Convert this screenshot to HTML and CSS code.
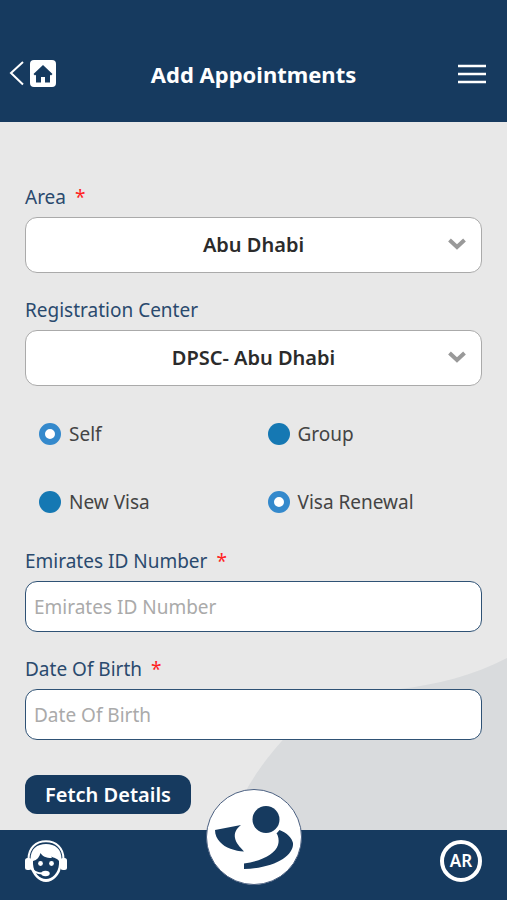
FILE: index.html
```html
<!DOCTYPE html>
<html lang="en">
<head>
  <meta charset="UTF-8">
  <meta name="viewport" content="width=device-width, initial-scale=1.0">
  <title>Add Appointments</title>
  <link rel="stylesheet" href="styles.css">
</head>
<body>
<header class="topbar">
  <a class="home-link" href="#" aria-label="Back to home">
    <svg width="48" height="28" viewBox="0 0 48 28">
      <path d="M14 2 L2 13 L14 24.500" fill="none" stroke="#fff" stroke-width="2"/>
      <rect x="21" y="0" width="26" height="27" rx="4" fill="#fff"/>
      <path d="M34 5 L43.500 14 L42 15.500 L41 14.700 V22.500 H36 V17 H32 V22.500 H27 V14.700 L26 15.500 L24.500 14 Z" fill="#163a5f"/>
    </svg>
  </a>
  <h1>Add Appointments</h1>
  <button class="menu-btn" type="button" aria-label="Menu">
    <svg width="28" height="20" viewBox="0 0 28 20">
      <path d="M0 2 H28 M0 10 H28 M0 18 H28" stroke="#fff" stroke-width="2.400"/>
    </svg>
  </button>
</header>

<main>
  <svg class="backdrop" width="272" height="175" viewBox="0 0 272 175" aria-hidden="true">
    <path d="M272 3 C240 20 200 30 165 34 C110 40 70 58 46 87 C30 105 20 120 13 132 C6 146 2 160 0 175 H272 Z" fill="#d9dbdd"/>
  </svg>

  <form>
    <div class="field">
      <label for="area">Area <span class="required">*</span></label>
      <div class="select-box">
        <select id="area">
          <option>Abu Dhabi</option>
        </select>
        <svg class="chevron" width="18" height="12" viewBox="0 0 18 12"><path d="M1.500 2 L9 9 L16.500 2" fill="none" stroke="#999" stroke-width="4"/></svg>
      </div>
    </div>

    <div class="field">
      <label for="center">Registration Center</label>
      <div class="select-box">
        <select id="center">
          <option>DPSC- Abu Dhabi</option>
        </select>
        <svg class="chevron" width="18" height="12" viewBox="0 0 18 12"><path d="M1.500 2 L9 9 L16.500 2" fill="none" stroke="#999" stroke-width="4"/></svg>
      </div>
    </div>

    <div class="choices">
      <label><input type="radio" name="who" checked> Self</label>
      <label><input type="radio" name="who"> Group</label>
      <label><input type="radio" name="visa"> New Visa</label>
      <label><input type="radio" name="visa" checked> Visa Renewal</label>
    </div>

    <div class="field">
      <label for="eid">Emirates ID Number <span class="required">*</span></label>
      <input class="text-input" id="eid" type="text" placeholder="Emirates ID Number">
    </div>

    <div class="field">
      <label for="dob">Date Of Birth <span class="required">*</span></label>
      <input class="text-input" id="dob" type="text" placeholder="Date Of Birth">
    </div>

    <button class="fetch-btn" type="button">Fetch Details</button>
  </form>
</main>

<footer class="bottombar">
  <a class="support-link" href="#" aria-label="Support">
    <svg width="42" height="42" viewBox="0 0 42 42">
      <path d="M3.500 19 C3.500 8 11 1.200 21 1.200 S38.500 8 38.500 19" fill="none" stroke="#fff" stroke-width="2"/>
      <path d="M5.500 19 C5.500 9 12 4 21 4 S36.500 9 36.500 19 V25 C35.500 35 28 42 21 42 S6.500 35 5.500 25 Z" fill="#fff"/>
      <path d="M8 21 C12 20 14.500 17 15.500 13 C17 16 21 18 27 18 L26 16.500 C29 18 32 18 34 21 V24 C33.500 33 27 39 21 39 S8.500 33 8 24 Z" fill="#163a5f"/>
      <rect x="0" y="18" width="6.500" height="12" rx="2.500" fill="#fff"/>
      <rect x="35.500" y="18" width="6.500" height="12" rx="2.500" fill="#fff"/>
      <circle cx="15.500" cy="23.500" r="2.400" fill="#fff"/>
      <circle cx="26.500" cy="23.500" r="2.400" fill="#fff"/>
      <path d="M5 27 C8 32 12 33.500 18 33.500" fill="none" stroke="#fff" stroke-width="1.800"/>
      <ellipse cx="20.500" cy="33.500" rx="4.200" ry="2.700" fill="#fff"/>
    </svg>
  </a>
  <a class="logo-link" href="#" aria-label="Main page">
    <svg width="96" height="96" viewBox="0 0 96 96">
      <circle cx="48" cy="48" r="47.500" fill="#fff" stroke="#4a5f80"/>
      <circle cx="60" cy="30.500" r="13.500" fill="#163a5f"/>
      <path d="M9 41 L35 36 C30 40 28 44 29 49 C30 54 33 57 38 62.500 C29 62 19 59 14 53 C11 50 9 46 9 41 Z" fill="#163a5f"/>
      <path d="M73.500 41 C81 44 86 49 87 54 C88 66 70 79 38 80 V74.500 C56 72 69 65 72 56 C73.500 51 72 46 70.500 44.500 Z" fill="#163a5f"/>
    </svg>
  </a>
  <button class="lang-btn" type="button">AR</button>
</footer>
</body>
</html>
```

FILE: styles.css
```css
* {
  box-sizing: border-box;
}

body {
  margin: 0;
  min-height: 100vh;
  display: flex;
  flex-direction: column;
  background: #e8e8e8;
  font-family: "Noto Sans", sans-serif;
  font-size: 19px;
  line-height: 28px;
  color: #444;
}

button,
input,
select {
  font: inherit;
}

.topbar {
  display: grid;
  grid-template-columns: 1fr auto 1fr;
  align-items: center;
  height: 122px;
  padding: 26px 9px 0;
  background: #163a5f;
  color: #fff;
}

.topbar h1 {
  margin: 0;
  font-size: 22px;
  font-weight: 700;
}

.home-link,
.support-link,
.logo-link {
  display: flex;
}

.menu-btn {
  display: flex;
  justify-self: end;
  margin-right: 12px;
  padding: 0;
  border: none;
  background: none;
  cursor: pointer;
}

main {
  position: relative;
  flex: 1;
  padding: 61px 25px 16px;
}

.backdrop {
  position: absolute;
  right: 0;
  bottom: 0;
}

form {
  position: relative;
  display: flex;
  flex-direction: column;
  gap: 23px;
}

.field {
  display: flex;
  flex-direction: column;
  gap: 6px;
}

.field > label {
  color: #2a4a6e;
}

.required {
  margin-left: 4px;
  color: #f22;
}

.select-box {
  position: relative;
}

.select-box select {
  display: block;
  width: 100%;
  height: 56px;
  padding: 0 40px;
  appearance: none;
  border: 1px solid #aaa;
  border-radius: 12px;
  background: #fff;
  color: #2b2b2b;
  font-size: 20px;
  font-weight: 600;
  text-align-last: center;
}

.chevron {
  position: absolute;
  right: 16px;
  top: 21px;
  pointer-events: none;
}

.choices {
  display: grid;
  grid-template-columns: 1fr 1fr;
  row-gap: 40px;
  padding: 11px 0 8px;
}

.choices label {
  display: flex;
  align-items: center;
  gap: 8px;
  padding-left: 14px;
}

.choices input {
  width: 22px;
  height: 22px;
  margin: 0;
  appearance: none;
  border-radius: 50%;
  background: #1578b3;
}

.choices input:checked {
  border: 6px solid #3489cc;
  background: #fff;
}

.text-input {
  width: 100%;
  height: 51px;
  padding: 0 8px;
  border: 1px solid #2f5275;
  border-radius: 12px;
  background: #fff;
  color: #2b2b2b;
}

.text-input::placeholder {
  color: #aaa;
  opacity: 1;
}

.fetch-btn {
  align-self: flex-start;
  height: 39px;
  margin-top: 12px;
  padding: 0 20px;
  border: none;
  border-radius: 12px;
  background: #163a5f;
  color: #fff;
  font-size: 20px;
  font-weight: 600;
  cursor: pointer;
}

.bottombar {
  position: relative;
  display: flex;
  justify-content: space-between;
  align-items: center;
  height: 70px;
  padding: 0 25px 8px;
  background: #163a5f;
}

/* the round logo rises above the bar */
.logo-link {
  position: absolute;
  left: 50%;
  bottom: 15px;
  transform: translateX(-50%);
}

.lang-btn {
  width: 42px;
  height: 42px;
  padding: 0;
  border: 4px solid #fff;
  border-radius: 50%;
  background: none;
  color: #fff;
  font-size: 17px;
  font-weight: 600;
  line-height: 24px;
  cursor: pointer;
}
```
